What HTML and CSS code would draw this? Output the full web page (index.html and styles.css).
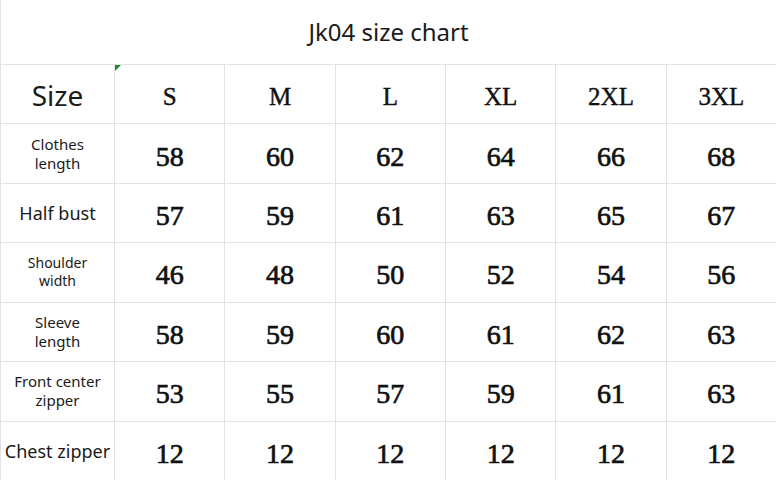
FILE: index.html
```html
<!DOCTYPE html>
<html lang="en">
<head>
<meta charset="utf-8">
<title>Jk04 size chart</title>
<link rel="stylesheet" href="styles.css">
</head>
<body>
<div class="chart">
  <div class="title">Jk04 size chart</div>

  <div class="cell label label-xl">Size</div>
  <div class="cell size first">S</div>
  <div class="cell size">M</div>
  <div class="cell size">L</div>
  <div class="cell size">XL</div>
  <div class="cell size">2XL</div>
  <div class="cell size">3XL</div>

  <div class="cell label label-sm">Clothes<br>length</div>
  <div class="cell num">58</div><div class="cell num">60</div><div class="cell num">62</div><div class="cell num">64</div><div class="cell num">66</div><div class="cell num">68</div>

  <div class="cell label label-lg">Half bust</div>
  <div class="cell num">57</div><div class="cell num">59</div><div class="cell num">61</div><div class="cell num">63</div><div class="cell num">65</div><div class="cell num">67</div>

  <div class="cell label label-xs">Shoulder<br>width</div>
  <div class="cell num">46</div><div class="cell num">48</div><div class="cell num">50</div><div class="cell num">52</div><div class="cell num">54</div><div class="cell num">56</div>

  <div class="cell label label-sm">Sleeve<br>length</div>
  <div class="cell num">58</div><div class="cell num">59</div><div class="cell num">60</div><div class="cell num">61</div><div class="cell num">62</div><div class="cell num">63</div>

  <div class="cell label label-sm">Front center<br>zipper</div>
  <div class="cell num">53</div><div class="cell num">55</div><div class="cell num">57</div><div class="cell num">59</div><div class="cell num">61</div><div class="cell num">63</div>

  <div class="cell label label-lg">Chest zipper</div>
  <div class="cell num">12</div><div class="cell num">12</div><div class="cell num">12</div><div class="cell num">12</div><div class="cell num">12</div><div class="cell num">12</div>
</div>
</body>
</html>
```
FILE: styles.css
```css
html, body {
  margin: 0;
  padding: 0;
  background: #ffffff;
}
body {
  width: 776px;
  height: 480px;
  overflow: hidden;
}
.chart {
  display: grid;
  grid-template-columns: 113px repeat(6, 1fr);
  grid-template-rows: 64px repeat(7, 1fr);
  gap: 1px;
  padding-left: 1px;
  background: #e3e3e3;
  width: 776px;
  height: 480px;
  box-sizing: border-box;
}
.title {
  grid-column: 1 / -1;
  background: #ffffff;
  display: flex;
  align-items: center;
  justify-content: center;
  font-family: "Noto Sans", "Open Sans", sans-serif;
  font-size: 24px;
  color: #1a1a1a;
  padding-bottom: 2px;
}
.cell {
  background: #ffffff;
  display: flex;
  align-items: center;
  justify-content: center;
  text-align: center;
  position: relative;
  color: #111111;
}
.label {
  font-family: "Noto Sans", "Open Sans", sans-serif;
  color: #1a1a1a;
}
.label-xl { font-size: 28px; padding-top: 2px; }
.label-lg { font-size: 18px; line-height: 22px; }
.label-sm { font-size: 15px; line-height: 19px; }
.label-xs { font-size: 14px; line-height: 18px; }
.size {
  font-family: "Liberation Serif", serif;
  font-size: 25px;
  padding-top: 5px;
  -webkit-text-stroke: 0.4px #111;
}
.first::before {
  content: "";
  position: absolute;
  left: 0;
  top: 0;
  border-top: 6px solid #1f8a36;
  border-right: 6px solid transparent;
}
.num {
  font-family: "Liberation Serif", serif;
  font-size: 28px;
  padding-top: 6px;
  -webkit-text-stroke: 0.7px #111;
}
```
